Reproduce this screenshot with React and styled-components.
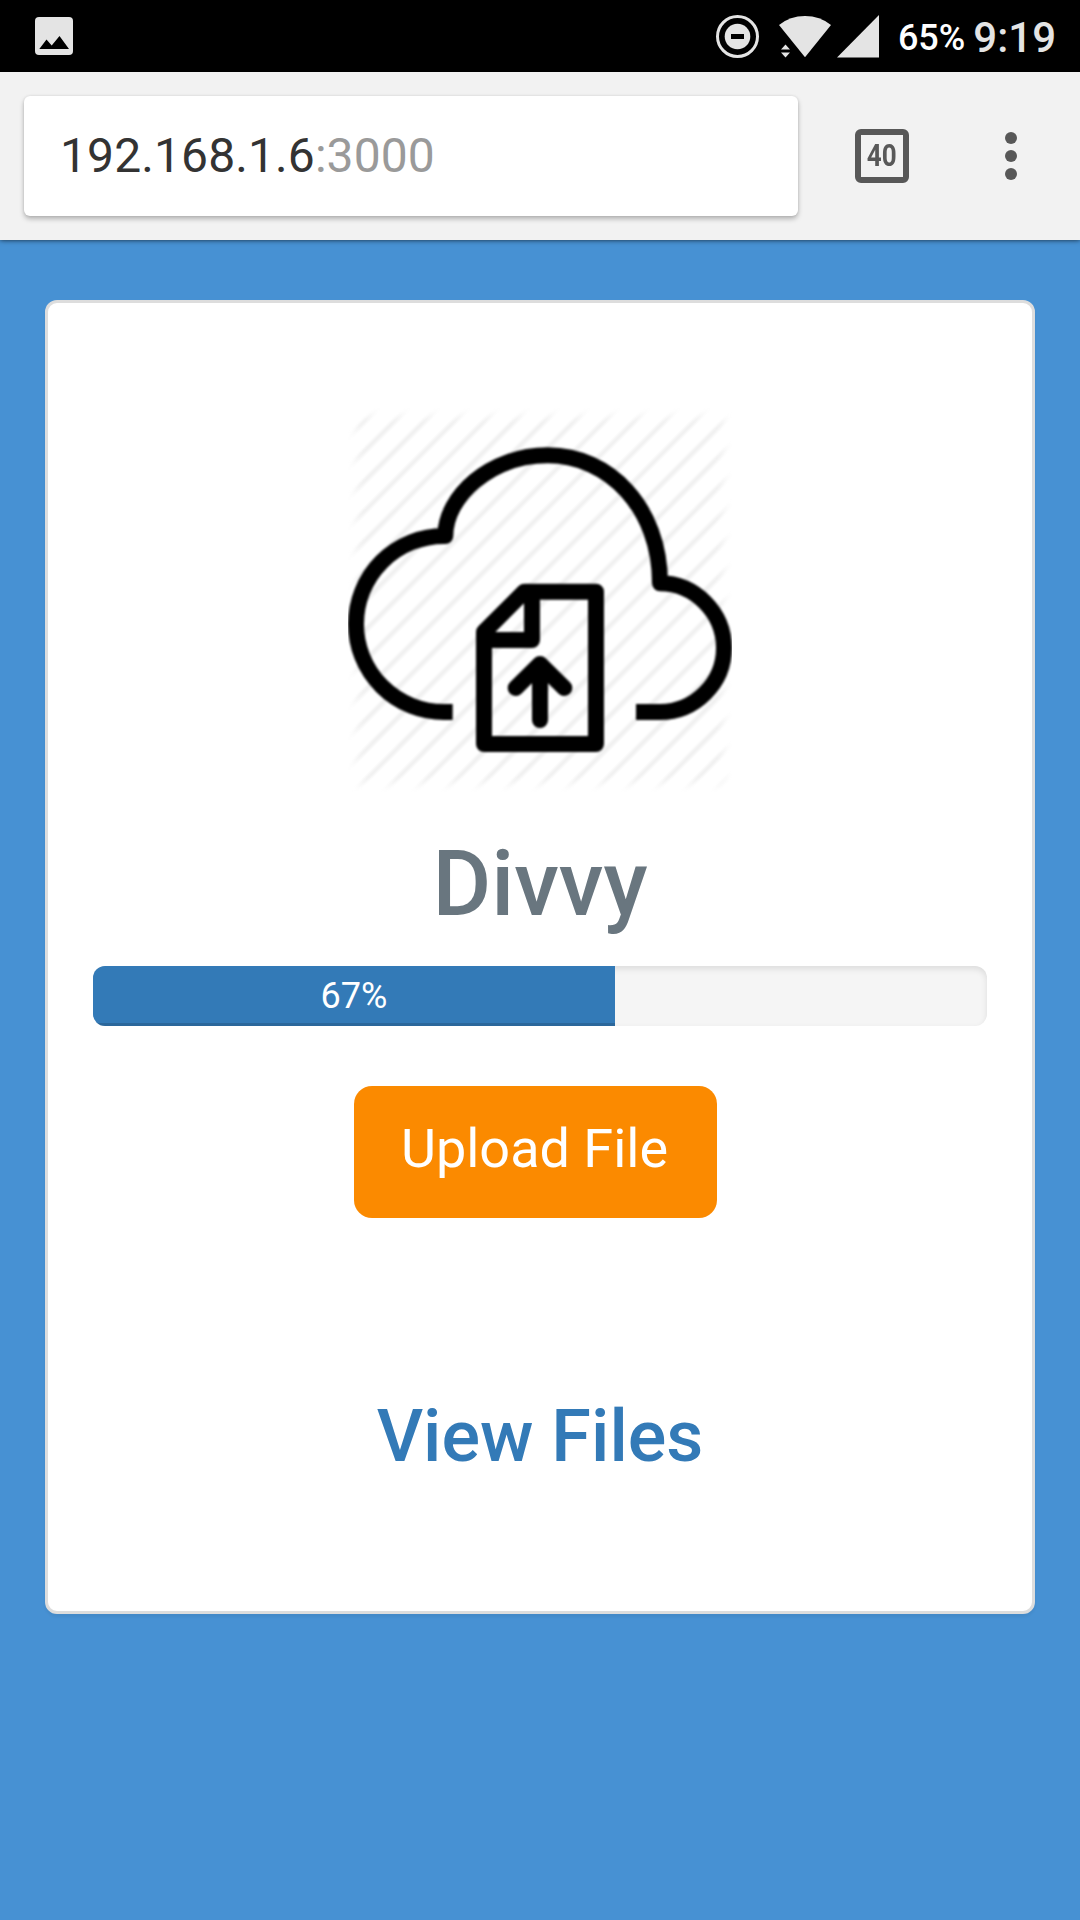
import React from "react";
import styled, { createGlobalStyle } from "styled-components";

const GlobalStyle = createGlobalStyle`
  *, *::before, *::after { box-sizing: border-box; }
  body {
    margin: 0;
    background: #4791d3;
    font-family: Roboto, "Noto Sans", sans-serif;
  }
`;

const Screen = styled.div`
  display: flex;
  flex-direction: column;
  width: 1080px;
  height: 1920px;
  overflow: hidden;
  background: #4791d3;
`;

const StatusBar = styled.header`
  flex: none;
  display: flex;
  align-items: center;
  justify-content: space-between;
  height: 72px;
  padding: 0 24px 0 35px;
  background: #000;
`;

const StatusIcons = styled.div`
  display: flex;
  align-items: center;
`;

const Glyph = styled.svg`
  display: block;
  flex: none;
  width: ${(p) => p.$w}px;
  height: ${(p) => p.$h}px;
  margin-right: ${(p) => p.$gap || 0}px;
`;

const Battery = styled.span`
  margin: 3px 8px 0 0;
  font-size: 36px;
  font-weight: 500;
  line-height: 42px;
  color: #fff;
`;

const Clock = styled.span`
  margin-top: 3px;
  font-size: 42px;
  font-weight: 500;
  line-height: 48px;
  color: #e4e4e4;
`;

const Toolbar = styled.div`
  flex: none;
  display: flex;
  align-items: center;
  height: 168px;
  padding: 0 63px 0 24px;
  background: #f2f2f2;
  box-shadow: 0 0 5px rgba(0, 0, 0, 0.75);
`;

const AddressField = styled.div`
  display: flex;
  align-items: center;
  width: 774px;
  height: 120px;
  padding: 0 36px;
  border-radius: 6px;
  background: #fff;
  box-shadow: 0 3px 5px rgba(0, 0, 0, 0.25), 0 0 3px rgba(0, 0, 0, 0.1);
  font-size: 48px;
  letter-spacing: 0.1px;
  line-height: 56px;
  color: #333;
`;

const Port = styled.span`
  color: #9a9a9a;
`;

const TabCount = styled.div`
  display: flex;
  align-items: center;
  justify-content: center;
  width: 54px;
  height: 54px;
  margin-left: 57px;
  border: 6px solid #585858;
  border-radius: 6px;
  font-size: 31px;
  font-weight: 700;
  line-height: 36px;
  color: #585858;
`;

const Condensed = styled.span`
  transform: scaleX(0.84);
`;

const Menu = styled.div`
  display: flex;
  flex-direction: column;
  gap: 6px;
  margin-left: auto;
`;

const Dot = styled.i`
  width: 12px;
  height: 12px;
  border-radius: 50%;
  background: #585858;
`;

const Page = styled.main`
  padding: 60px 45px;
`;

const Card = styled.section`
  display: flex;
  flex-direction: column;
  align-items: center;
  height: 1314px;
  padding: 105px 45px 0;
  border: 3px solid #ddd;
  border-radius: 12px;
  background: #fff;
  box-shadow: 0 3px 3px rgba(0, 0, 0, 0.05);
`;

const Title = styled.h1`
  margin: 40px 0 0;
  font-size: 90px;
  font-weight: 500;
  line-height: 105px;
  color: #69767f;
`;

const Progress = styled.div`
  align-self: stretch;
  height: 60px;
  margin-top: 29px;
  border-radius: 12px;
  overflow: hidden;
  background: #f5f5f5;
  box-shadow: inset 0 3px 6px rgba(0, 0, 0, 0.1);
`;

const ProgressFill = styled.div`
  width: ${(p) => p.$filled}px;
  height: 60px;
  background: #337ab7;
  box-shadow: inset 0 -3px 0 rgba(0, 0, 0, 0.15);
  font-size: 36px;
  line-height: 60px;
  text-align: center;
  color: #fff;
`;

const UploadButton = styled.button`
  width: 363px;
  height: 132px;
  margin: 60px 9px 0 0;
  padding: 0 2px 6px 0;
  border: 0;
  border-radius: 18px;
  background: #fb8a00;
  font-family: inherit;
  font-size: 54px;
  line-height: 64px;
  color: #fff;
`;

const FilesLink = styled.a`
  margin-top: 177px;
  font-size: 72px;
  font-weight: 500;
  line-height: 84px;
  color: #337ab7;
  text-decoration: none;
`;

const stripes = Array.from({ length: 26 }, (_, i) => 137 + i * 90);

function CloudUpload() {
  return (
    <Glyph $w={384} $h={384} viewBox="24 24 1152 1152" fill="none">
      <defs>
        <filter id="fade" x="-5%" y="-5%" width="110%" height="110%">
          <feGaussianBlur stdDeviation="14" />
        </filter>
        <mask id="edge" maskUnits="userSpaceOnUse" x="0" y="0" width="1200" height="1200">
          <rect x="48" y="48" width="1104" height="1104" fill="#fff" filter="url(#fade)" />
        </mask>
        <filter id="soft" filterUnits="userSpaceOnUse" x="0" y="0" width="1200" height="1200">
          <feGaussianBlur stdDeviation="3" />
        </filter>
      </defs>
      <g mask="url(#edge)">
        <g stroke="#f1f1f1" strokeWidth="14" filter="url(#soft)">
          {stripes.map((sum) => (
            <path key={sum} d={`M${sum} 0L${sum - 1200} 1200`} />
          ))}
        </g>
      </g>
      <g stroke="#000" strokeWidth="48" strokeLinejoin="round" filter="url(#soft)">
        <path d="M338 936H312A264 264 0 0 1 312 408H316C316 290 450 166 624 166C806 166 960 322 960 550C1064 550 1152 638 1152 744C1152 850 1064 936 960 936H888" />
        <path d="M432 696L553 575H768V1032H432ZM576 575V720H432" />
        <path d="M527 864L600 792L673 864M600 792V960" strokeLinecap="round" />
      </g>
    </Glyph>
  );
}

export default function App() {
  return (
    <Screen>
      <GlobalStyle />
      <StatusBar>
        <Glyph $w={38} $h={38} viewBox="0 0 38 38">
          <rect width="38" height="38" rx="4" fill="#e4e4e4" />
          <path d="M4.3 32L11.5 22.5L16.7 28.5L24.5 19L34 32Z" fill="#000" />
        </Glyph>
        <StatusIcons>
          <Glyph $w={43} $h={43} $gap={20} viewBox="0 0 43 43">
            <circle cx="21.5" cy="21.5" r="20" fill="none" stroke="#e4e4e4" strokeWidth="3" />
            <circle cx="21.5" cy="21.5" r="12.8" fill="#e4e4e4" />
            <path d="M15 19h13v5H15Z" fill="#000" />
          </Glyph>
          <Glyph $w={52} $h={43} $gap={6} viewBox="0 0 52 43" fill="#e4e4e4">
            <path d="M0 10Q11 1 26 1T52 10L26 42.3Z" />
            <path d="M2 34.5L6.5 29.5L11 34.5ZM2 37.5H11L6.5 42.5Z" stroke="#000" strokeWidth="5" />
            <path d="M2 34.5L6.5 29.5L11 34.5ZM2 37.5H11L6.5 42.5Z" />
          </Glyph>
          <Glyph $w={42} $h={43} $gap={19} viewBox="0 0 42 43">
            <path d="M42 0V42.5H0Z" fill="#e4e4e4" />
          </Glyph>
          <Battery>65%</Battery>
          <Clock>9:19</Clock>
        </StatusIcons>
      </StatusBar>
      <Toolbar>
        <AddressField>
          192.168.1.6<Port>:3000</Port>
        </AddressField>
        <TabCount>
          <Condensed>40</Condensed>
        </TabCount>
        <Menu>
          <Dot />
          <Dot />
          <Dot />
        </Menu>
      </Toolbar>
      <Page>
        <Card>
          <CloudUpload />
          <Title>Divvy</Title>
          <Progress>
            <ProgressFill $filled={522}>67%</ProgressFill>
          </Progress>
          <UploadButton>Upload File</UploadButton>
          <FilesLink>View Files</FilesLink>
        </Card>
      </Page>
    </Screen>
  );
}
